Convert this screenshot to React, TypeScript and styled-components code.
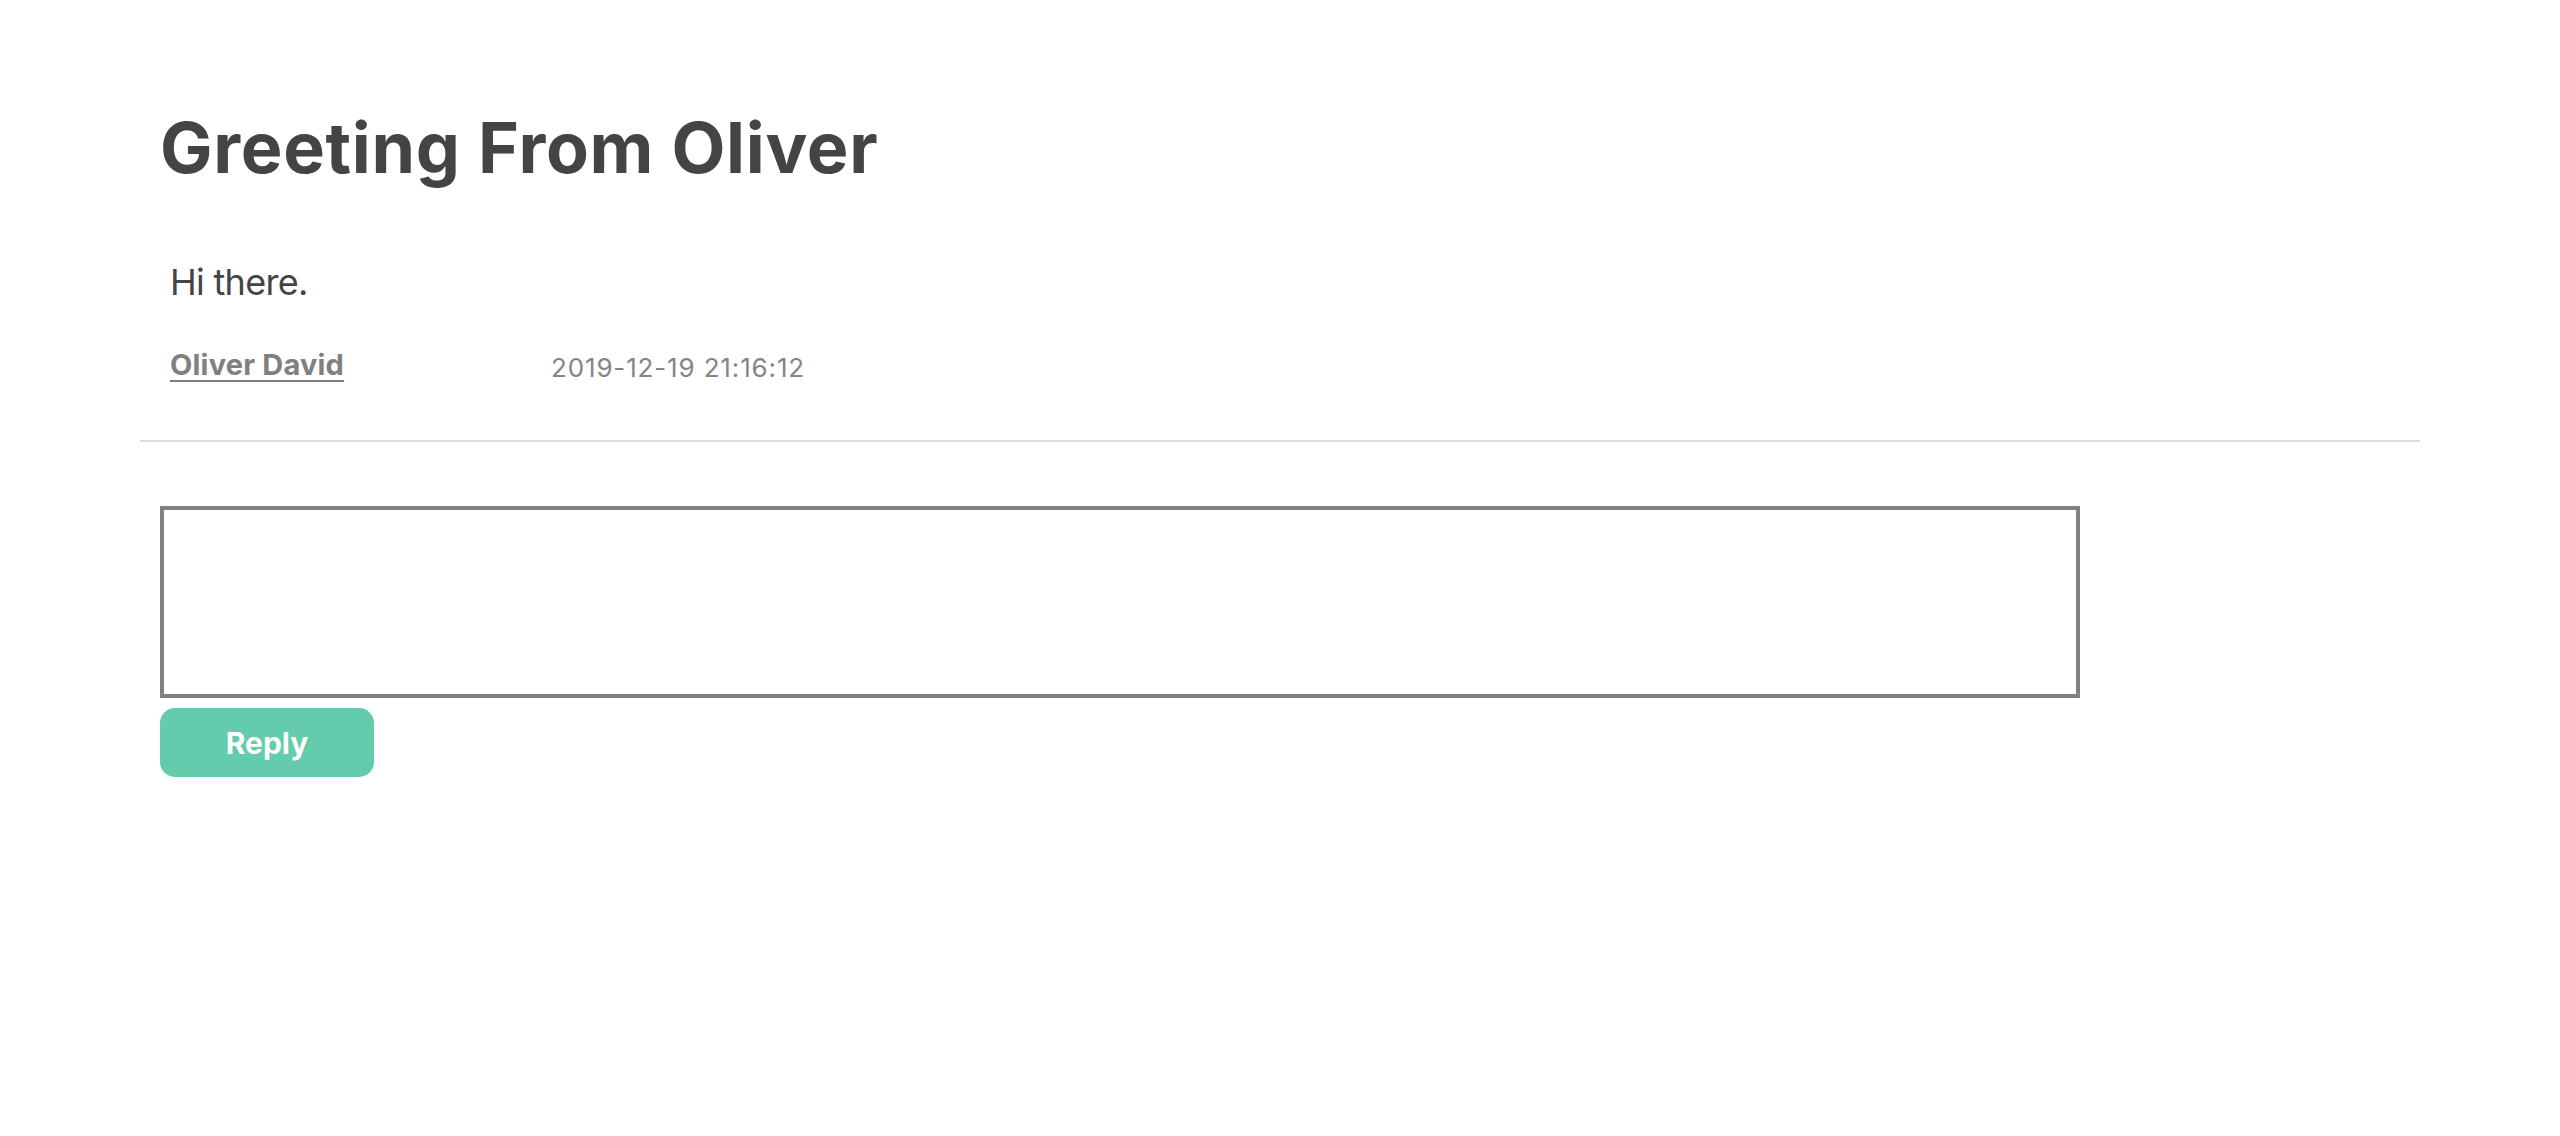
import React from "react";
import styled, { createGlobalStyle } from "styled-components";

const GlobalStyle = createGlobalStyle`
  html, body {
    margin: 0;
    padding: 0;
    background: #ffffff;
    font-family: Inter, "Noto Sans", "Liberation Sans", sans-serif;
  }
  * { box-sizing: border-box; }
`;

const Page = styled.main`
  padding: 0 140px;
`;

const Post = styled.article`
  padding: 106px 20px 0 20px;
  display: flex;
  flex-direction: column;
`;

const Title = styled.h1`
  margin: 0;
  font-size: 70px;
  line-height: 84px;
  font-weight: 700;
  color: #444444;
  letter-spacing: 0.7px;
`;

const Body = styled.p`
  margin: 71px 0 0 10px;
  font-size: 36px;
  line-height: 43px;
  font-weight: 400;
  color: #444444;
  letter-spacing: -0.7px;
`;

const Meta = styled.div`
  margin: 44px 0 0 10px;
  display: flex;
  align-items: baseline;
`;

const Author = styled.a`
  width: 381px;
  font-size: 29px;
  line-height: 34px;
  font-weight: 700;
  color: #808080;
  letter-spacing: 0.2px;
  text-decoration: underline;
  text-underline-offset: 5px;
  cursor: pointer;
`;

const Time = styled.span`
  font-size: 26px;
  line-height: 34px;
  color: #858585;
  letter-spacing: 0.85px;
  position: relative;
  top: 2px;
`;

const Divider = styled.hr`
  margin: 57px 0 0 0;
  border: none;
  height: 2px;
  background: #dddddd;
`;

const ReplyForm = styled.form`
  padding: 64px 20px 0 20px;
  display: flex;
  flex-direction: column;
  align-items: flex-start;
  gap: 10px;
`;

const ReplyBox = styled.textarea`
  width: 1920px;
  height: 192px;
  border: 4px solid #808080;
  border-radius: 0;
  padding: 8px;
  font-family: inherit;
  font-size: 24px;
  resize: none;
  outline: none;
  display: block;
`;

const ReplyButton = styled.button`
  width: 214px;
  height: 69px;
  border: none;
  border-radius: 15px;
  background: #64cbad;
  color: #ffffff;
  font-family: inherit;
  font-size: 30px;
  font-weight: 700;
  cursor: pointer;
`;

export default function App() {
  return (
    <>
      <GlobalStyle />
      <Page>
        <Post>
          <Title>Greeting From Oliver</Title>
          <Body>Hi there.</Body>
          <Meta>
            <Author>Oliver David</Author>
            <Time>2019-12-19 21:16:12</Time>
          </Meta>
        </Post>
        <Divider />
        <ReplyForm onSubmit={(e) => e.preventDefault()}>
          <ReplyBox />
          <ReplyButton type="submit">Reply</ReplyButton>
        </ReplyForm>
      </Page>
    </>
  );
}
